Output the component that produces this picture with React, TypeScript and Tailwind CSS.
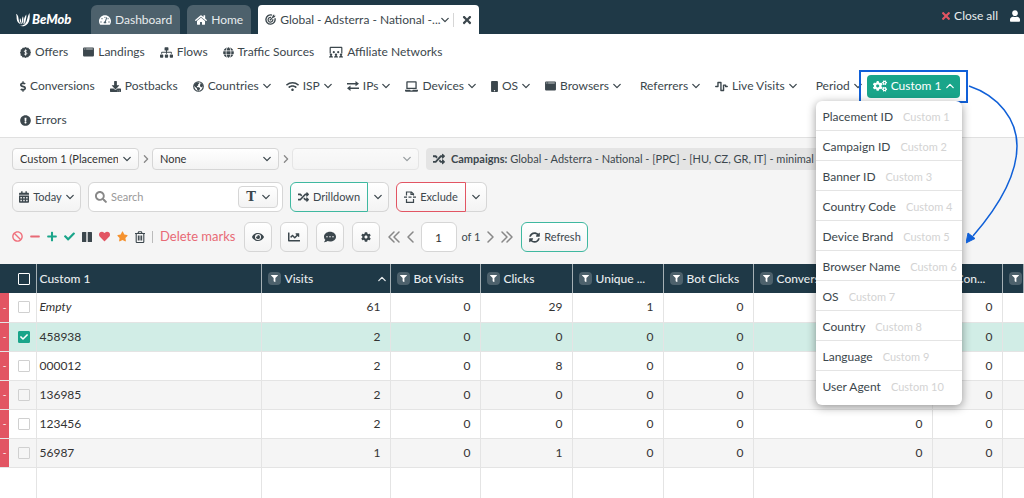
import type { ReactNode } from "react";
import {
  FaBan,
  FaCalendarAlt,
  FaChartLine,
  FaCheck,
  FaCog,
  FaCogs,
  FaCommentDots,
  FaDollarSign,
  FaDownload,
  FaExclamationCircle,
  FaEye,
  FaFilter,
  FaGlobe,
  FaHeart,
  FaHome,
  FaLaptop,
  FaMinus,
  FaMobile,
  FaPlus,
  FaRandom,
  FaSearch,
  FaSitemap,
  FaStar,
  FaSyncAlt,
  FaTachometerAlt,
  FaTimes,
  FaUser,
  FaWifi,
} from "react-icons/fa";

const Chevron = ({ up = false, className = "" }: { up?: boolean; className?: string }) => (
  <svg viewBox="0 0 10 10" className={`w-2 h-2 shrink-0 ${className}`} fill="none" stroke="currentColor" strokeWidth="1.6" strokeLinecap="round" strokeLinejoin="round">
    <path d={up ? "M1 7l4-4 4 4" : "M1 3l4 4 4-4"} />
  </svg>
);

const Pager = ({ d, wide = false }: { d: string; wide?: boolean }) => (
  <svg viewBox={wide ? "0 0 12 12" : "0 0 7 12"} className={wide ? "w-3 h-3" : "w-[7px] h-3"} fill="none" stroke="currentColor" strokeWidth="1.5" strokeLinecap="round" strokeLinejoin="round">
    <path d={d} />
  </svg>
);

const Logo = () => (
  <svg viewBox="0 0 14 14" className="w-3.5 h-3.5" fill="#fff">
    <path d="M0 1c1.600.6 2.200 2 2.400 3.700.2 2.300.8 4.600 2.600 6.600C2.300 10.600.9 8.600.7 6 .6 4 .7 2.500 0 1z" />
    <path d="M4 5c1.300 1.600 1 4 2.200 6.400C4.200 10.200 3.200 8 4 5z" />
    <path d="M7 3.200c.8 2.300.1 5.500.7 8.300C5.600 9.900 5.400 6 7 3.200z" />
    <path d="M10.300 1.400c.6 3-1.200 6.400-1.200 10.200C7.100 8.700 7.800 4.300 10.300 1.400z" />
    <path d="M13.400 0c.9 4.600.1 9.600-3.100 12.100-1.800 1.400-4.800 1.700-6.700.5 2.300.3 4.500-.4 5.800-2C11.500 7.800 11.200 3.600 13.400 0z" />
  </svg>
);

const TargetIcon = () => (
  <svg viewBox="0 0 12 12" className="w-[11px] h-[11px] shrink-0" fill="none" stroke="currentColor">
    <path d="M7.600 1.300A5 5 0 1 0 10.800 4.600" strokeWidth="1.500" />
    <path d="M6.700 3.700A2.600 2.600 0 1 0 8.500 5.600" strokeWidth="1.300" />
    <circle cx="6" cy="6.200" r="1" fill="currentColor" stroke="none" />
    <path d="M6 6.200l3.200-3.400" strokeWidth="1.100" />
    <path d="M8.200 3.900V2L10 .3v1.700h1.700L10 3.900z" fill="currentColor" stroke="none" />
  </svg>
);

const BadgeDollar = () => (
  <svg viewBox="0 0 12 12" className="w-[11px] h-[11px]" fill="currentColor">
    <path d="M6 0l1.500.8 1.700-.1.700 1.500 1.400.8v1.700L12 6l-.7 1.400v1.700l-1.500.8-.8 1.400-1.600-.1L6 12l-1.500-.8-1.700.2L2 9.900.6 9.200.7 7.500 0 6l.8-1.500L.7 2.900l1.400-.8.8-1.400 1.700.1z" />
    <path d="M7.500 4.400C7 3.600 4.800 3.500 4.800 4.800c0 1.400 2.600.8 2.600 2.300 0 1.300-2.200 1.400-2.900.4M6.100 2.600v6.800" fill="none" stroke="#fff" strokeWidth="1" />
  </svg>
);

const WindowIcon = () => (
  <svg viewBox="0 0 12 11" className="w-[11px] h-2.5" fill="currentColor">
    <rect y=".5" width="12" height="10" rx="1.200" />
    <path d="M1.300 1.700h1.300v1.100H1.300zM3.400 1.700h7.300v1.100H3.400z" fill="#fff" opacity=".7" />
  </svg>
);

const NetworkIcon = () => (
  <svg viewBox="0 0 14 12" className="w-3.5 h-3" fill="currentColor">
    <path d="M.6 7.500V1.700C.6 1.200 1 .8 1.500.8h11c.5 0 .9.400.9.900v5.800h-1.200V2H1.800v5.500z" />
    <circle cx="4.800" cy="6.200" r="1.100" />
    <circle cx="9.200" cy="6.200" r="1.100" />
    <circle cx="2" cy="8.800" r="1.200" />
    <circle cx="7" cy="8.800" r="1.200" />
    <circle cx="12" cy="8.800" r="1.200" />
    <path d="M0 11.600c0-1 .6-1.500 1.300-1.500h1.400c.7 0 1.300.5 1.300 1.500zM5 11.600c0-1 .6-1.500 1.300-1.500h1.400c.7 0 1.300.5 1.300 1.500zM10 11.600c0-1 .6-1.500 1.300-1.500h1.400c.7 0 1.300.5 1.300 1.500z" />
  </svg>
);

const EarthIcon = () => (
  <svg viewBox="0 0 12 12" className="w-[11px] h-[11px]" fill="currentColor">
    <circle cx="6" cy="6" r="5.200" fill="none" stroke="currentColor" strokeWidth="1.300" />
    <path d="M1.500 3.500L4 1.300l2.300.2.700 1-1.500 1.300.2 1-1.500.9.500 1h1.900l1.200 1.200-.5 1.500L5.600 11 4.500 9.300 4 7.600 2.300 6.500 1 5zM8.200 2.500l1.800.6 1 2-1.200 1.600-1.500-.2-.7-1.400z" />
  </svg>
);

const ArrowsIcon = () => (
  <svg viewBox="0 0 12 10" className="w-3 h-2.5" fill="currentColor">
    <path d="M0 2h8.500V0L12 2.700 8.500 5.300V3.500H0zM12 6.500H3.500v-2L0 7.300 3.500 10V8H12z" />
  </svg>
);

const WaveIcon = () => (
  <svg viewBox="0 0 14 11" className="w-[13px] h-[11px]" fill="none" stroke="currentColor" strokeWidth="1.500" strokeLinejoin="round" strokeLinecap="round">
    <path d="M.8 5.500h2.400V1.200h3.200v8.600h2.800V4h2.200v1.500h1.800" />
  </svg>
);

const ExcludeIcon = () => (
  <svg viewBox="0 0 12 12" className="w-3 h-3" fill="none" stroke="currentColor" strokeWidth="1.200">
    <path d="M2.500 4.500V1h5l2 2v1.500M7 1v2.500h2.500M2.500 8v3.300h7V8M0 6.200h3M4.500 6.200h3M9 6.200h3" />
  </svg>
);

const TrashIcon = () => (
  <svg viewBox="0 0 10 12" className="w-2.5 h-3" fill="none" stroke="#3c474d" strokeWidth="1.100">
    <path d="M0 2.500h10M3 2.300l.7-1.600h2.600L7 2.300M1.200 2.600v8.200c0 .4.3.7.7.7h6.200c.4 0 .7-.3.7-.7V2.600M3.400 4.500v5M5 4.500v5M6.600 4.500v5" />
  </svg>
);

interface NavItem {
  label: string;
  icon?: ReactNode;
  menu?: boolean;
}

const sections: NavItem[] = [
  { label: "Offers", icon: <BadgeDollar /> },
  { label: "Landings", icon: <WindowIcon /> },
  { label: "Flows", icon: <FaSitemap className="w-[13px] h-[11px]" /> },
  { label: "Traffic Sources", icon: <FaGlobe className="w-[11px] h-[11px]" /> },
  { label: "Affiliate Networks", icon: <NetworkIcon /> },
];

const reports: NavItem[] = [
  { label: "Conversions", icon: <FaDollarSign className="w-1.5 h-[11px]" /> },
  { label: "Postbacks", icon: <FaDownload className="w-[11px] h-[11px]" /> },
  { label: "Countries", icon: <EarthIcon />, menu: true },
  { label: "ISP", icon: <FaWifi className="w-[13px] h-[11px]" />, menu: true },
  { label: "IPs", icon: <ArrowsIcon />, menu: true },
  { label: "Devices", icon: <FaLaptop className="w-[13px] h-[11px]" />, menu: true },
  { label: "OS", icon: <FaMobile className="w-[7px] h-[11px]" />, menu: true },
  { label: "Browsers", icon: <WindowIcon />, menu: true },
  { label: "Referrers", icon: <span />, menu: true },
  { label: "Live Visits", icon: <WaveIcon />, menu: true },
  { label: "Period", icon: <span />, menu: true },
];

const customs = [
  "Placement ID",
  "Campaign ID",
  "Banner ID",
  "Country Code",
  "Device Brand",
  "Browser Name",
  "OS",
  "Country",
  "Language",
  "User Agent",
];

const columns = ["Visits", "Bot Visits", "Clicks", "Unique ...", "Bot Clicks", "Conversions", "Con...", ""];

const rows = [
  { name: "Empty", values: [61, 0, 29, 1, 0, 0, 0] },
  { name: "458938", values: [2, 0, 0, 0, 0, 0, 0], checked: true },
  { name: "000012", values: [2, 0, 8, 0, 0, 0, 0] },
  { name: "136985", values: [2, 0, 0, 0, 0, 0, 0] },
  { name: "123456", values: [2, 0, 0, 0, 0, 0, 0] },
  { name: "56987", values: [1, 0, 1, 0, 0, 0, 0] },
];

const btn = "flex items-center justify-center border bg-linear-to-b from-white to-[#f3f3f3]";
const grayBtn = `${btn} border-[#d6d6d6]`;
const greenBtn = `${btn} border-[#3fb8a0]`;
const redBtn = `${btn} border-[#e25563]`;

function NavLink({ item }: { item: NavItem }) {
  return (
    <a href="#" className="flex items-center gap-1 h-[34px] whitespace-nowrap">
      {item.icon}
      <span>{item.label}</span>
      {item.menu && <Chevron />}
    </a>
  );
}

function Checkbox({ label, checked = false, header = false }: { label: string; checked?: boolean; header?: boolean }) {
  return (
    <span className="relative block w-3 h-3 ml-[9px]">
      <input
        type="checkbox"
        aria-label={label}
        defaultChecked={checked}
        className={`peer block w-3 h-3 appearance-none border rounded-[1px] checked:bg-[#1aa58a] checked:border-[#1aa58a] ${header ? "border-white" : "border-[#d0d0d0]"}`}
      />
      <FaCheck className="absolute inset-0 m-auto w-2 h-2 text-white pointer-events-none hidden peer-checked:block" />
    </span>
  );
}

function Select({ label, value, disabled = false }: { label: string; value: string; disabled?: boolean }) {
  return (
    <div className={`relative w-[127px] ${disabled ? "opacity-50" : ""}`}>
      <select
        aria-label={label}
        disabled={disabled}
        className="block w-full h-[22px] appearance-none rounded border border-[#d6d6d6] bg-linear-to-b from-white to-[#f3f3f3] pl-[7px] pr-5 text-[11px] text-[#333]"
      >
        <option>{value}</option>
      </select>
      <Chevron className="absolute right-2 top-[7px] pointer-events-none" />
    </div>
  );
}

function CustomMenu() {
  return (
    <div className="relative -ml-[18px] border-2 border-[#1060d8] px-1.5 py-[3px]">
      <button className="flex items-center gap-1 h-[23px] rounded bg-[#1aa58a] px-1.5 text-white">
        <FaCogs className="w-3.5 h-3" />
        Custom 1
        <Chevron up />
      </button>
      <ul className="absolute z-20 top-[29px] right-1 w-[146px] rounded-md bg-white pb-[5px] shadow-[0_2px_10px_rgba(0,0,0,0.4)]">
        {customs.map((name, i) => (
          <li key={name} className="border-b border-[#e4e4e4] last:border-b-0">
            <a href="#" className="flex items-center gap-2.5 h-[29px] pt-1 pl-[7px] whitespace-nowrap">
              {name}
              <span className="text-[11px] text-[#d3d3d3]">Custom {i + 1}</span>
            </a>
          </li>
        ))}
      </ul>
      <svg viewBox="0 0 60 170" className="absolute z-20 top-3 left-full w-[60px] h-[170px] pointer-events-none" fill="none">
        <path d="M3 2C33 12 51 36 51 62C51 92 33 122 7 152" stroke="#1060d8" strokeWidth="1.500" />
        <path d="M0 159l2-10 7 5.500z" fill="#1060d8" stroke="#1060d8" strokeLinejoin="round" />
      </svg>
    </div>
  );
}

function Header() {
  return (
    <header className="flex items-end h-[34px] shrink-0 bg-[#1f3947] text-[#e8ecee]">
      <a href="#" aria-label="BeMob" className="flex items-center gap-0.5 h-[29px] w-[75px] ml-4 text-white text-[13px] font-black italic">
        <Logo />
        BeMob
      </a>
      <nav className="flex gap-[7px]">
        <a href="#" className="flex items-center gap-1 h-[29px] rounded-t-md bg-[#4d616c] px-2">
          <FaTachometerAlt className="w-3 h-3 text-white" />
          Dashboard
        </a>
        <a href="#" className="flex items-center gap-1 h-[29px] rounded-t-md bg-[#4d616c] px-2">
          <FaHome className="w-3 h-3 text-white" />
          Home
        </a>
        <div className="flex items-center gap-1 h-[29px] w-[221px] rounded-t bg-white pl-[7px] text-[#3c474d]">
          <TargetIcon />
          <span className="whitespace-nowrap">Global - Adsterra - National -...</span>
          <Chevron className="-ml-1" />
          <span className="h-3.5 border-l border-[#d6d6d6]" />
          <button aria-label="Close tab" className="ml-1">
            <FaTimes className="w-2.5 h-3" />
          </button>
        </div>
      </nav>
      <div className="ml-auto flex items-center gap-1 h-9 pr-1">
        <button className="flex items-center gap-1">
          <FaTimes className="w-2 h-3 text-[#e25563]" />
          Close all
        </button>
        <FaUser className="w-2.5 h-3 ml-2 text-white" />
      </div>
    </header>
  );
}

function Toolbar() {
  return (
    <section className="border-t border-[#e0e0e0] bg-[#f5f5f5] px-3 pt-2.5 pb-3 text-[11px]">
      <div className="flex items-center gap-[3px]">
        <Select label="First grouping" value="Custom 1 (Placement ID)" />
        <Chevron className="-rotate-90 -mr-px text-[#888]" />
        <Select label="Second grouping" value="None" />
        <Chevron className="-rotate-90 -mr-px text-[#888]" />
        <Select label="Third grouping" value="" disabled />
        <div className="flex items-center gap-1.5 h-[22px] ml-1 rounded bg-[#e4e4e4] px-[7px] whitespace-nowrap">
          <FaRandom className="w-3 h-3" />
          <span>
            <b>Campaigns:</b> Global - Adsterra - National - [PPC] - [HU, CZ, GR, IT] - minimal data
          </span>
        </div>
      </div>

      <div className="flex items-center gap-[7px] mt-3">
        <button className={`${grayBtn} gap-1 h-[30px] w-[69px] rounded-md`}>
          <FaCalendarAlt className="w-2.5 h-3" />
          Today
          <Chevron />
        </button>
        <div className="flex items-center h-[30px] w-[195px] rounded-md border border-[#d6d6d6] bg-white pl-1.5 pr-1">
          <FaSearch className="w-3 h-3 text-[#888]" />
          <input aria-label="Search" placeholder="Search" className="min-w-0 flex-1 px-1 outline-none placeholder:text-[#999]" />
          <button aria-label="Match mode" className={`${grayBtn} gap-1.5 h-[22px] w-10 rounded`}>
            <span className="font-['DejaVu_Serif'] font-bold text-[13px]">T</span>
            <Chevron />
          </button>
        </div>
        <div className="flex">
          <button className={`${greenBtn} gap-1 h-[30px] w-[78px] rounded-l-md`}>
            <FaRandom className="w-[11px] h-3" />
            Drilldown
          </button>
          <button aria-label="Drilldown options" className={`${grayBtn} h-[30px] w-[21px] rounded-r-md border-l-0`}>
            <Chevron />
          </button>
        </div>
        <div className="flex">
          <button className={`${redBtn} gap-1 h-[30px] w-[70px] rounded-l-md`}>
            <ExcludeIcon />
            Exclude
          </button>
          <button aria-label="Exclude options" className={`${grayBtn} h-[30px] w-[21px] rounded-r-md border-l-0`}>
            <Chevron />
          </button>
        </div>
      </div>

      <div className="flex items-center gap-2 mt-2.5">
        <div className="flex items-center gap-[7px]">
          <button aria-label="Ban"><FaBan className="w-[11px] h-[11px] text-[#f0707c]" /></button>
          <button aria-label="Minus"><FaMinus className="w-2.5 h-[11px] text-[#e86a76]" /></button>
          <button aria-label="Plus"><FaPlus className="w-2.5 h-[11px] text-[#1aa58a]" /></button>
          <button aria-label="Check"><FaCheck className="w-[11px] h-[11px] text-[#1aa58a]" /></button>
          <button aria-label="Pause">
            <svg viewBox="0 0 10 10" className="w-2.5 h-2.5" fill="#3c474d">
              <rect width="4.300" height="10" rx=".5" />
              <rect x="5.700" width="4.300" height="10" rx=".5" />
            </svg>
          </button>
          <button aria-label="Favourite"><FaHeart className="w-[11px] h-[11px] text-[#e25563]" /></button>
          <button aria-label="Star"><FaStar className="w-[11px] h-[11px] text-[#f5922f]" /></button>
          <button aria-label="Trash"><TrashIcon /></button>
          <span className="h-3 border-l border-[#bbb]" />
          <button className="text-[13px] text-[#e86a76]">Delete marks</button>
        </div>
        <button aria-label="Visibility" className={`${grayBtn} w-7 h-[30px] rounded-md`}><FaEye className="w-3 h-3" /></button>
        <button aria-label="Chart" className={`${grayBtn} w-7 h-[30px] rounded-md`}><FaChartLine className="w-3 h-3" /></button>
        <button aria-label="Comments" className={`${grayBtn} w-7 h-[30px] rounded-md`}><FaCommentDots className="w-3 h-3" /></button>
        <button aria-label="Settings" className={`${grayBtn} w-7 h-[30px] rounded-md`}><FaCog className="w-2.5 h-3" /></button>
        <div className="flex items-center gap-[7px] text-[#888]">
          <button aria-label="First page"><Pager wide d="M6 1L1 6l5 5M11 1L6 6l5 5" /></button>
          <button aria-label="Previous page"><Pager d="M6 1L1 6l5 5" /></button>
          <input aria-label="Page" defaultValue="1" className="w-9 h-[30px] rounded-md border border-[#d6d6d6] bg-white text-center text-xs text-[#333]" />
          <span className="-ml-0.5 text-[#3c474d]">of 1</span>
          <button aria-label="Next page"><Pager d="M1 1l5 5-5 5" /></button>
          <button aria-label="Last page"><Pager wide d="M1 1l5 5-5 5M6 1l5 5-5 5" /></button>
        </div>
        <button className={`${greenBtn} gap-1 w-[67px] h-[30px] rounded-md`}>
          <FaSyncAlt className="w-[11px] h-[11px]" />
          Refresh
        </button>
      </div>
    </section>
  );
}

function ReportTable() {
  return (
    <table className="w-full table-fixed border-collapse text-xs text-[#333]">
      <colgroup>
        <col className="w-[9px]" />
        <col className="w-[27px]" />
        <col className="w-[225px]" />
        <col className="w-[129px]" />
        <col className="w-[90px]" />
        <col className="w-[92px]" />
        <col className="w-[91px]" />
        <col className="w-[90px]" />
        <col className="w-[179px]" />
        <col className="w-[70px]" />
        <col />
      </colgroup>
      <thead>
        <tr className="h-[29px] bg-[#1f3947] text-[#e8ecee]">
          <td />
          <th className="border-r border-[#a5b0b5]"><Checkbox header label="Select all rows" /></th>
          <th className="border-r border-[#a5b0b5] pl-[3px] text-left font-medium">Custom 1</th>
          {columns.map((name, i) => (
            <th key={i} className="border-r border-[#a5b0b5] pl-1.5 pr-2 text-left font-medium overflow-hidden">
              <span className="flex items-center gap-1 whitespace-nowrap">
                <span className="flex items-center justify-center w-[13px] h-[13px] shrink-0 rounded bg-[#4d616c]">
                  <FaFilter className="w-[7px] h-[7px] text-white" />
                </span>
                {name}
                {i === 0 && <Chevron up className="ml-auto -mr-1" />}
              </span>
            </th>
          ))}
        </tr>
      </thead>
      <tbody>
        {rows.map((row, i) => (
          <tr key={row.name} className={`h-[29px] border-b border-[#e4e4e4] ${row.checked ? "bg-[#d1ede6]" : i % 2 ? "bg-[#f5f5f5]" : "bg-white"}`}>
            <td className="bg-[#e25563] text-[10px] text-white text-center">-</td>
            <td className="border-r border-[#e4e4e4]"><Checkbox label={`Select ${row.name}`} checked={row.checked} /></td>
            <td className={`border-r border-[#e4e4e4] pl-[3px] ${row.name === "Empty" ? "italic" : ""}`}>{row.name}</td>
            {row.values.map((value, j) => (
              <td key={j} className="border-r border-[#e4e4e4] pr-[9px] text-right">{value}</td>
            ))}
            <td />
          </tr>
        ))}
        <tr className="h-40">
          <td />
          <td className="border-r border-[#e4e4e4]" />
          <td className="border-r border-[#e4e4e4]" />
          {rows[0].values.map((_, j) => (
            <td key={j} className="border-r border-[#e4e4e4]" />
          ))}
          <td />
        </tr>
      </tbody>
    </table>
  );
}

export default function App() {
  return (
    <div className="flex flex-col h-screen overflow-hidden bg-white font-[Lato,sans-serif] text-xs text-[#3c474d]">
      <Header />
      <nav className="pl-5 pt-px">
        <div className="flex flex-wrap gap-x-[15px]">
          {sections.map((item) => (
            <NavLink key={item.label} item={item} />
          ))}
        </div>
        <div className="flex flex-wrap items-center gap-x-[15px]">
          {reports.map((item) => (
            <NavLink key={item.label} item={item} />
          ))}
          <CustomMenu />
          <NavLink item={{ label: "Errors", icon: <FaExclamationCircle className="w-[11px] h-[11px]" /> }} />
        </div>
      </nav>
      <Toolbar />
      <ReportTable />
    </div>
  );
}
